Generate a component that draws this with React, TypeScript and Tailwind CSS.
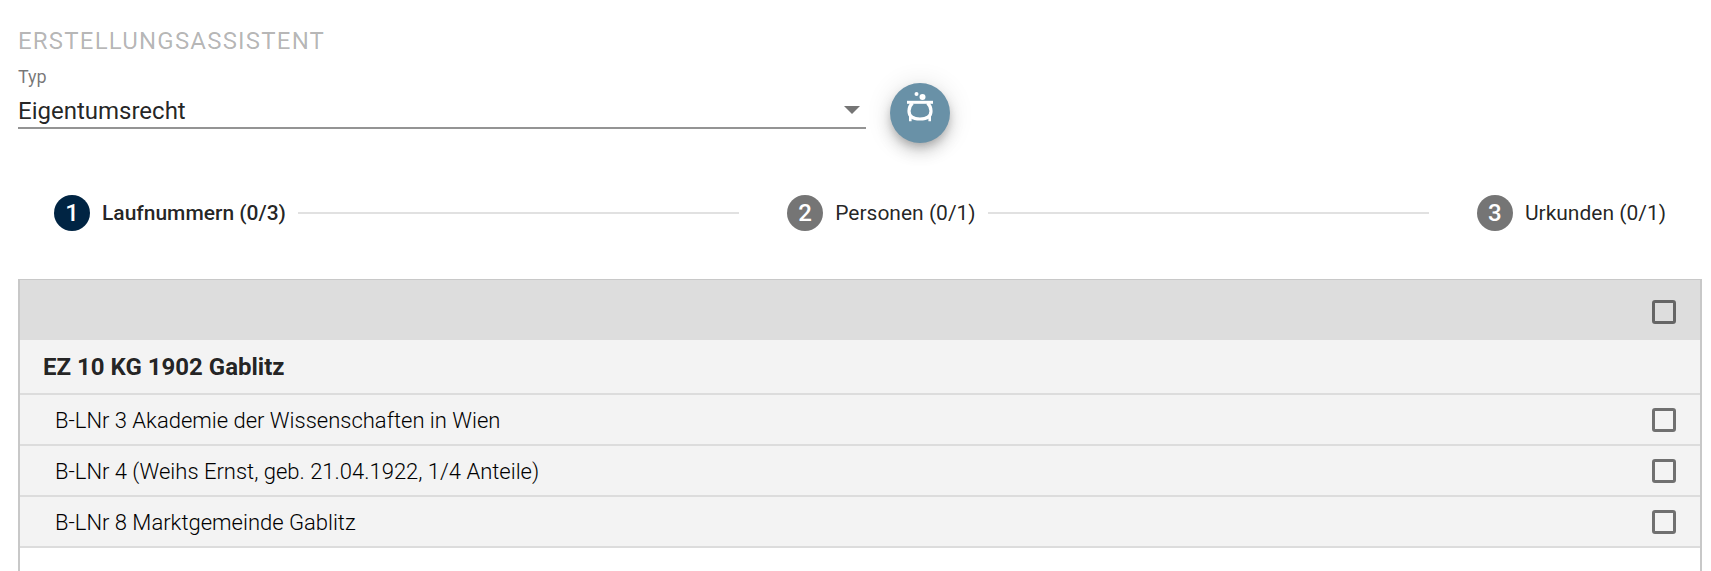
import { useState } from 'react';

const steps = [
  { label: 'Laufnummern (0/3)', active: true },
  { label: 'Personen (0/1)', active: false },
  { label: 'Urkunden (0/1)', active: false },
];

const entries = [
  { id: 'lnr-3', text: 'B-LNr 3 Akademie der Wissenschaften in Wien' },
  { id: 'lnr-4', text: 'B-LNr 4 (Weihs Ernst, geb. 21.04.1922, 1/4 Anteile)' },
  { id: 'lnr-8', text: 'B-LNr 8 Marktgemeinde Gablitz' },
];

const checkboxClass =
  'block size-6 ml-auto appearance-none rounded-[3px] border-3 border-black/54 checked:bg-[#002443] cursor-pointer';

function CauldronIcon() {
  return (
    <svg viewBox="0 0 40 40" className="size-10" fill="none" stroke="white" aria-hidden="true">
      <circle cx="16.5" cy="8" r="2" fill="white" stroke="none" />
      <circle cx="22.5" cy="11" r="3" fill="white" stroke="none" />
      <path d="M7 16.3h26" strokeWidth="3" />
      <path
        d="M12.5 17C9.8 19.500 9 22 9 25c0 5.500 4.500 8 11 8s11-2.500 11-8c0-3-.8-5.500-3.500-8"
        strokeWidth="3.2"
      />
      <path d="M10.300 29v6.200M29.700 29v6.200" strokeWidth="2.600" />
    </svg>
  );
}

export default function App() {
  const [selected, setSelected] = useState<string[]>([]);
  const allSelected = selected.length === entries.length;

  const toggle = (id: string) =>
    setSelected(selected.includes(id) ? selected.filter(s => s !== id) : [...selected, id]);

  return (
    <main className="flex min-h-screen flex-col bg-white pl-[18px] pr-[9px] pt-[25px] font-[Roboto,sans-serif] text-black/87">
      <h1 className="text-2xl font-normal leading-8 tracking-wider text-black/30">ERSTELLUNGSASSISTENT</h1>

      <div className="flex items-end gap-6">
        <div className="relative mb-3.5 mt-2 w-[calc(50%+6px)]">
          <label htmlFor="typ" className="block text-lg leading-6 text-black/54">Typ</label>
          <select
            id="typ"
            className="block h-10 w-full appearance-none border-b-2 border-black/42 bg-transparent pt-1.5 text-2xl outline-none"
          >
            <option>Eigentumsrecht</option>
          </select>
          <svg viewBox="0 0 16 8" className="pointer-events-none absolute bottom-[15px] right-1.5 h-2 w-4" aria-hidden="true">
            <path d="M0 0h16L8 8z" fill="#757575" />
          </svg>
        </div>
        <button
          type="button"
          aria-label="Erstellen"
          className="flex size-15 shrink-0 justify-center rounded-full bg-[#6991a7] pt-[3px] shadow-[0_5px_8px_-2px_rgba(0,0,0,0.2),0_9px_15px_0_rgba(0,0,0,0.14),0_2px_27px_0_rgba(0,0,0,0.12)]"
        >
          <CauldronIcon />
        </button>
      </div>

      <ol className="flex h-[136px] items-center px-9 pt-1">
        {steps.map((step, i) => (
          <li key={step.label} className={i < steps.length - 1 ? 'flex flex-auto items-center' : 'flex items-center'}>
            <button type="button" className="flex items-center gap-3">
              <span
                className={`flex size-9 items-center justify-center rounded-full text-2xl font-medium text-white ${
                  step.active ? 'bg-[#002443]' : 'bg-[#757575]'
                }`}
              >
                {i + 1}
              </span>
              <span className={`whitespace-nowrap pt-0.5 text-[21px] ${step.active ? 'font-medium' : ''}`}>
                {step.label}
              </span>
            </button>
            {i < steps.length - 1 && <span className="ml-3 mr-12 h-0.5 flex-1 bg-[#e1e1e1]" />}
          </li>
        ))}
      </ol>

      <section className="flex-1 border-x-2 border-t border-[#c8c8c8]">
        <table className="w-full border-separate border-spacing-0 text-left">
          <thead>
            <tr className="h-15 bg-[#ddd]">
              <th />
              <th className="w-20 pr-6 pt-1">
                <input
                  type="checkbox"
                  aria-label="Alle auswählen"
                  className={checkboxClass}
                  checked={allSelected}
                  onChange={() => setSelected(allSelected ? [] : entries.map(e => e.id))}
                />
              </th>
            </tr>
          </thead>
          <tbody>
            <tr className="h-[55px] bg-[#f3f3f3]">
              <th colSpan={2} className="border-b-2 border-[#dcdcdc] pl-[23px] text-2xl font-bold">
                EZ 10 KG 1902 Gablitz
              </th>
            </tr>
            {entries.map(entry => (
              <tr key={entry.id} className="h-[51px] bg-[#f3f3f3]">
                <td className="border-b-2 border-[#dcdcdc] pl-[35px] pt-0.5 text-[22px] font-light text-black">
                  <label htmlFor={entry.id}>{entry.text}</label>
                </td>
                <td className="border-b-2 border-[#dcdcdc] pr-6">
                  <input
                    id={entry.id}
                    type="checkbox"
                    className={checkboxClass}
                    checked={selected.includes(entry.id)}
                    onChange={() => toggle(entry.id)}
                  />
                </td>
              </tr>
            ))}
          </tbody>
        </table>
      </section>
    </main>
  );
}
